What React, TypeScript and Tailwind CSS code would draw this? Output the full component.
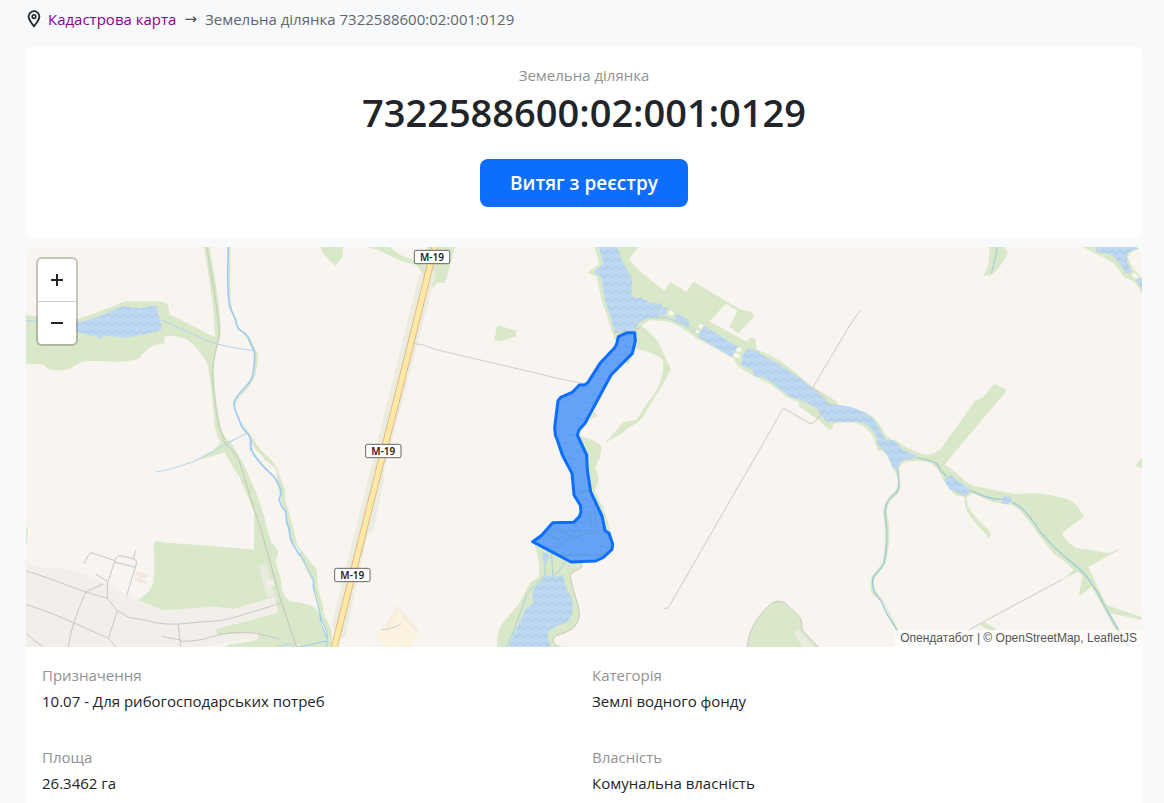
import { SVGProps } from "react";

interface Detail {
  label: string;
  value: string;
}

const cadNumber = "7322588600:02:001:0129";

const details: Detail[] = [
  { label: "Призначення", value: "10.07 - Для рибогосподарських потреб" },
  { label: "Категорія", value: "Землі водного фонду" },
  { label: "Площа", value: "26.3462 га" },
  { label: "Власність", value: "Комунальна власність" },
];

const roadSigns = [
  { x: 1218, y: 30 },
  { x: 1072, y: 612 },
  { x: 979, y: 984 },
];

const parcelPath =
  "M1777 269L1804 257H1826L1828 281L1819 319L1755 384L1677 529L1659 549L1654 564L1682 624L1684 669L1694 734L1728 807L1737 851L1749 859L1760 891L1758 907L1732 931L1709 942L1635 945L1520 884L1547 865L1580 827L1643 826L1660 809L1665 793L1663 775L1644 744L1638 679L1609 624L1594 579L1588 564L1586 541L1596 461L1604 451L1640 435L1660 414L1677 413L1686 406L1722 349L1766 302L1772 291Z";

const PinIcon: React.FC<SVGProps<SVGSVGElement>> = (props) => (
  <svg {...props} viewBox="0 0 14 18" fill="none" stroke="currentColor">
    <path
      strokeWidth={1.8}
      strokeLinejoin="round"
      d="M7 16.4C4.6 13.4 1.6 9.9 1.6 6.6a5.4 5.4 0 0 1 10.8 0c0 3.3-3 6.8-5.4 9.8z"
    />
    <circle cx="7" cy="6.6" r="1.8" strokeWidth={1.6} />
  </svg>
);

// three map units make one pixel
const ParcelMap: React.FC = () => (
  <svg
    className="block w-full h-[400px]"
    viewBox="0 0 3348 1200"
    preserveAspectRatio="xMidYMid slice"
    role="img"
    aria-label={cadNumber}
  >
    <defs>
      <pattern id="water" width="24" height="24" patternUnits="userSpaceOnUse">
        <rect width="24" height="24" fill="#bed8f1" />
        <path
          d="M-1 7q4 1 7 5q7 5 13 0q3 -4 6 -5"
          fill="none"
          stroke="#afcce9"
          strokeWidth={4}
        />
      </pattern>
    </defs>
    <rect width="3348" height="1200" fill="#f8f4ef" />

    {/* north-west: pond, railway belt, stream */}
    <g transform="translate(-18 -21)">
      <g fill="#d9e8c8">
        <path d="M18 226L60 230L170 238C220 222 270 204 315 184L410 184Q445 186 446 200L447 222L585 292C583 200 566 100 551 21H568C582 100 603 210 602 270C602 310 580 330 581 390C584 450 594 520 602 560C612 590 625 605 641 630L690 720L650 700L612 634L525 663L583 629L609 616C588 590 583 560 581 520C577 460 570 420 564 376C548 340 510 298 490 295Q460 284 433 290V312Q420 310 405 314Q380 325 357 355C320 372 240 362 205 363C165 365 162 392 118 391Q92 392 84 386C72 378 72 373 62 373L18 371Z" />
        <path d="M624 21H632C631 90 628 160 636 210L655 262L690 292L712 340Q716 365 708 395C702 435 660 465 644 495C650 530 680 565 722 632H708L640 495L698 415L704 340L684 292L652 262L628 200Z" />
      </g>
      <path
        d="M168 248C210 240 270 218 300 200Q315 196 340 204Q375 206 395 197L408 197L424 252V270C400 278 350 288 310 294Q290 290 270 288L250 290L240 298L232 290Q200 285 170 275Z"
        fill="url(#water)"
      />
      <path
        d="M18 243H60M424 239L560 302Q600 318 698 332M583 629L680 580"
        fill="none"
        stroke="#b3d1ed"
        strokeWidth={3}
      />
      <path
        d="M560 21C576 110 592 200 597 260Q599 290 592 315Q575 370 578 420C585 480 588 570 622 612"
        fill="none"
        stroke="#c5d2bd"
        strokeWidth={4}
      />
      <path
        d="M625 21Q620 150 629 198C634 215 645 230 648 245Q651 265 660 270Q683 284 687 300L703 335Q706 370 697 410C690 435 650 460 642 488C643 515 656 530 660 547Q668 567 680 578Q692 588 692 605V632"
        fill="none"
        stroke="#9ecbf2"
        strokeWidth={5}
      />
    </g>

    {/* south-west: village and fields */}
    <g transform="translate(-18 579)">
      <path
        d="M18 370L75 384Q130 380 165 394C230 410 280 445 355 481L430 512L600 500L640 507L765 470L775 518L590 570V585L715 580Q718 595 700 598L610 608L550 622H18Z"
        fill="#f2eeea"
      />
      <g fill="#d9e8c8">
        <path d="M400 315Q402 302 417 303L435 308Q490 312 510 313L702 329V215L660 115L625 34L640 20L670 70L705 150Q725 200 735 240L752 305Q775 325 773 345L767 365L782 415Q784 450 795 472L812 484C840 487 870 492 882 502L900 522V622H615L625 614L700 602Q717 598 715 585L710 577L592 585L588 568L775 518L765 470L640 507Q610 502 590 500L430 511L355 481L385 456Q402 435 401 415Q406 370 400 315Z" />
        <path d="M18 262H24L20 310H18Z" />
        <path d="M695 0L740 47Q775 75 776 100L795 150V180L807 215L832 315L890 390L892 450L900 490V510L885 390L810 295L790 200L775 150L768 85L735 60L700 15Z" />
        <path d="M607 0H625L640 18L625 34L525 63L583 29Z" />
      </g>
      <path d="M716 376L738 371L765 468L742 473Z" fill="#eaece0" />
      <path d="M737 425L758 418L764 435L743 441Z" fill="#f4efea" />
      <path
        d="M351 394L385 404L380 416L366 412L362 418L380 423L376 431L343 420L347 412L356 414L359 408L348 404Z"
        fill="#f2e7e1"
      />
      <path
        d="M410 95C440 93 490 75 525 63L642 0M770 622L810 610L825 622M850 622L900 608"
        fill="none"
        stroke="#b6d4ee"
        strokeWidth={3}
      />
      <path
        d="M609 0L625 18Q655 45 665 85C690 170 700 200 722 265L782 480L830 622"
        fill="none"
        stroke="#bfc7b6"
        strokeWidth={3}
      />
      <g fill="none" stroke="#cbc6c2" strokeWidth={3}>
        <path d="M18 393C80 410 150 440 197 456L262 475L292 512L325 532L375 540Q420 555 475 552L605 541Q640 535 782 489" />
        <path d="M18 493Q100 520 160 548L265 595L290 622M18 580Q40 603 72 622M144 622Q155 550 197 456L250 432M292 512L265 595M475 552L482 622" />
        <path d="M193 372Q205 338 215 338L285 362L262 430V475M285 362Q290 347 302 347L340 356Q350 358 350 368L346 382L320 466M285 366L346 382M340 356L347 331M228 403L262 425" />
        <path d="M427 590L482 600V604Q530 605 570 592C620 575 660 577 713 580Q730 588 745 588L782 598" />
      </g>
      <path
        d="M692 0V20C700 60 755 100 768 118L783 150Q785 165 777 177Q785 205 797 212L800 248L807 265L811 295C825 335 860 365 882 415L880 440L897 485L903 555L923 600V622"
        fill="none"
        stroke="#9ecbf2"
        strokeWidth={5}
      />
    </g>

    {/* highway corridor */}
    <g transform="translate(822 -21)">
      <g fill="#d9e8c8">
        <path d="M62 21H130L127 50L106 78L68 40Z" />
        <path d="M200 21H270Q290 45 345 62L385 75L380 21H465L455 60L435 128H412L395 145L370 110Q360 80 340 72C290 65 250 30 200 21Z" />
        <path d="M592 256L650 272L648 290L600 304L583 300Z" />
        <path d="M0 930L50 990L53 1045L70 1100V1120L95 1170V1221H80V1180L55 1110L40 1030L0 950ZM0 1090L35 1100Q55 1115 63 1150L85 1221H0Z" />
      </g>
      <path
        d="M358 102L375 110L385 60L408 100L250 700L252 720L220 870L203 882L135 1192H110L95 1155Z"
        fill="#eaece0"
      />
      <path
        d="M290 1095L358 1172L335 1205V1221H252L232 1180L258 1160Z"
        fill="#fbf3df"
      />
      <path
        d="M260 1160L292 1105L352 1172"
        fill="none"
        stroke="#f5ebdf"
        strokeWidth={9}
      />
      <path
        d="M338 310L370 315Q400 328 430 334L720 402C780 419 830 425 855 432M244 1168Q265 1172 303 1152"
        fill="none"
        stroke="#cfcbc7"
        strokeWidth={3}
      />
      <path
        d="M0 940L40 1020L42 1050L65 1140L82 1180L80 1221M0 1221L78 1203"
        fill="none"
        stroke="#9ecbf2"
        strokeWidth={3}
      />
      <path
        d="M404 21L328 328L102 1225"
        fill="none"
        stroke="#e5b68d"
        strokeWidth={21}
      />
      <path
        d="M404 21L328 328L102 1225"
        fill="none"
        stroke="#fee9a5"
        strokeWidth={15}
      />
    </g>

    {/* central reservoir and the chain of ponds */}
    <g transform="translate(1482 -21)">
      <g fill="#d9e8c8">
        <path d="M223 21H355L326 57C360 100 400 125 433 153L451 127L500 155L520 125L660 208L695 217L702 230L655 280L628 260L652 214L618 191L568 244L680 305Q695 283 708 300V327L780 362V455C740 420 720 420 655 380L640 355L530 295Q480 255 440 244L390 240Q350 265 345 275L285 300L245 180L230 110L203 97L238 72Z" />
        <path d="M345 262Q370 255 380 270L415 305L430 340L453 388C430 440 390 490 370 530C345 560 320 560 305 582L258 606L310 546L350 540C370 500 410 460 418 430Q435 390 428 360Q420 345 345 325Z" />
        <path d="M325 345L335 350L328 371L313 370ZM222 515L234 528L210 538ZM178 588Q220 595 244 620L242 640H198Z" />
      </g>
      <path
        d="M236 21H291L308 65L336 115L334 165Q345 176 360 173L390 186L427 192L418 230L378 234Q350 245 342 270L285 278Q270 220 257 190L243 110L222 97L250 72Z"
        fill="url(#water)"
      />
      <path
        d="M430 200L443 205L435 225L420 223ZM470 220L505 240L508 262L465 240ZM552 257L655 322L635 350L532 290ZM685 325L722 335L790 372V450L740 410L664 375L668 345Z"
        fill="url(#water)"
      />
      <path
        d="M450 210L462 217L456 228L444 222ZM540 251L551 256L546 266L535 261ZM530 267L540 272L535 280L525 275ZM652 322L667 326L663 337L648 333ZM643 338L662 345L657 355L640 350Z"
        fill="#faf7f2"
      />
      <path
        d="M345 272Q350 232 390 231H435Q470 240 540 273M342 265Q355 240 385 234H435Q465 240 528 278"
        fill="none"
        stroke="#a9cfe3"
        strokeWidth={2}
      />
      <path
        d="M280 280L340 273Q355 268 365 258"
        fill="none"
        stroke="#c9cdbf"
        strokeWidth={3}
      />
    </g>

    {/* lower reservoir */}
    <g transform="translate(1362 579)">
      <g fill="#d9e8c8">
        <path d="M335 0L363 15L360 55L345 80L357 115L345 155L370 205L385 250L398 300L330 300L315 60L295 0ZM378 5L392 0H380Z" />
        <path d="M160 305L270 365L305 370V380L272 402C275 440 295 480 298 520C300 560 265 580 225 590Q220 600 222 610L250 622H52Q48 570 75 540L115 495L150 430L175 410Q185 370 160 305Z" />
      </g>
      <path
        d="M200 405L220 410L250 405L255 435L277 480L278 518L262 548Q215 560 205 575Q200 600 215 622H88C95 585 120 550 135 510L158 490V450ZM190 335L207 342V358L198 370L188 360Z"
        fill="url(#water)"
      />
      <path
        d="M80 622Q100 580 142 460L195 405V370M215 340L218 408L240 390L253 366"
        fill="none"
        stroke="#a9d0df"
        strokeWidth={3}
      />
      <path
        d="M305 370V382L270 403C275 450 300 500 298 522C297 545 285 558 275 567C250 582 230 580 219 595V605L232 622M553 506Q562 507 568 498L780 130L837 32"
        fill="none"
        stroke="#cdc9c5"
        strokeWidth={3}
      />
    </g>

    {/* north-east */}
    <g transform="translate(2202 -21)">
      <g fill="#d9e8c8">
        <path d="M0 333Q40 345 100 392L158 442L200 465L231 485V495Q300 505 330 525C365 550 375 590 385 592Q400 605 460 632H355L345 605C340 580 310 550 275 547L222 550L215 568L203 566L180 543L118 500L116 486L75 468Q40 430 0 414Z" />
        <path d="M688 21H733L744 40L722 75Q705 100 690 107H669L680 90Q690 70 688 21ZM703 431L741 451L590 630H540L645 483L668 473Z" />
        <path d="M968 21H1146V27Q1105 32 1105 55L1120 85L1146 115V162Q1130 120 1090 110C1070 70 1050 60 1010 42Z" />
      </g>
      <path
        d="M-20 330L0 342L60 375L120 415L175 460L207 490L270 500C330 520 345 535 360 570L375 597L440 630H360L355 600C340 560 310 545 290 545L200 545Q180 525 170 505L135 485L90 470L20 415L-20 408Z"
        fill="url(#water)"
      />
      <path
        d="M1008 21H1146L1104 38Q1098 50 1103 70L1115 95L1100 102L1075 65L1052 43L1010 36ZM1127 116L1146 113V150Z"
        fill="url(#water)"
      />
      <path d="M1146 26Q1105 34 1105 55Q1112 80 1146 106Z" fill="#f8f4ef" />
      <path d="M1122 97L1135 110L1129 118L1115 105Z" fill="#faf7f2" />
      <path
        d="M711 21L709 40L694 100"
        fill="none"
        stroke="#acd2df"
        strokeWidth={4}
      />
      <path
        d="M301 210L270 255L158 443L185 462L204 489L185 520L165 545Q157 555 145 548L75 507Q68 504 65 512L-3 632"
        fill="none"
        stroke="#cdc9c5"
        strokeWidth={3}
      />
    </g>

    {/* south-east */}
    <g transform="translate(2142 579)">
      <g fill="#d9e8c8">
        <path d="M405 0L465 0Q530 45 565 44Q600 40 625 0H672L614 75C660 100 660 120 700 137L820 162L885 159C940 165 980 175 990 181C1010 190 1020 210 1032 230L970 275Q965 280 970 288Q990 315 1010 325L1055 330Q1095 340 1110 338L1147 325Q1120 340 1044 381L1100 495L1206 532V540L1112 520L1150 590L1135 585L1055 440L1020 467L1017 460L1028 410L1015 395L968 418L1000 390Q990 375 940 340C890 280 850 210 820 197L755 185L698 160L680 170C680 220 720 240 750 275Q755 285 747 295C720 260 680 230 674 190V170L645 165L610 120C590 70 570 58 500 65Q475 70 478 100L482 140Q478 160 465 170Q438 190 441 220C455 280 445 350 433 375C400 420 395 420 405 450L435 490L477 575H470L433 490L395 460Q388 425 395 410L427 370C440 300 435 270 430 220Q432 185 450 168L475 145L475 120L460 85L440 45L408 15Z" />
        <path d="M22 622C25 560 65 515 95 490Q115 478 133 488L175 525Q188 540 186 570L236 622ZM720 555L735 547L772 570H745ZM1184 78L1206 55V84Z" />
      </g>
      <path
        d="M410 0H460L490 30L530 47Q525 58 500 58Q480 60 472 88L458 83L440 40L412 10ZM630 105L693 150L675 170L650 155L630 150L612 120ZM790 167L810 170L817 183L802 193L785 190Z"
        fill="url(#water)"
      />
      <path d="M173 568L225 622H190Q170 600 164 578Z" fill="#eaece0" />
      <g fill="none" stroke="#9fcbd8" strokeWidth={4}>
        <path d="M472 88Q482 135 470 155C450 175 435 185 435 220Q448 300 432 370Q425 385 400 410Q390 450 425 485L440 520L475 577L510 622" />
        <path d="M530 52Q570 60 590 70L600 88L620 110M693 152Q750 180 785 178M817 187C860 205 890 260 900 275C970 360 1010 370 1040 410C1090 475 1080 480 1120 545L1167 622" />
      </g>
      <path
        d="M22 622C25 560 65 515 95 490Q115 478 133 488L175 525Q188 540 186 570L236 622M640 622L690 568L820 497L968 418"
        fill="none"
        stroke="#cdc9c5"
        strokeWidth={3}
      />
    </g>

    {/* the parcel itself */}
    <path d={parcelPath} fill="url(#water)" />
    <path
      d="M1580 910C1640 860 1690 855 1740 860M1655 742L1692 728M1690 790L1700 855M1645 830L1665 860M1590 840L1635 870M1560 860L1600 878M1610 925L1740 923M1705 790L1715 855"
      fill="none"
      stroke="#b0cfb5"
      strokeWidth={4}
    />
    <path
      d={parcelPath}
      fill="#0d6efd"
      fillOpacity={0.5}
      stroke="#0d6efd"
      strokeWidth={9}
      strokeLinejoin="round"
    />

    {roadSigns.map((sign) => (
      <g key={sign.y} transform={`translate(${sign.x} ${sign.y})`}>
        <rect
          x="-53"
          y="-20"
          width="106"
          height="40"
          rx="5"
          fill="#fff"
          stroke="#666"
          strokeWidth={3}
        />
        <text
          y="11"
          textAnchor="middle"
          fill="#222"
          fontSize="30"
          fontWeight="600"
          fontFamily="'Noto Sans', sans-serif"
        >
          M-19
        </text>
      </g>
    ))}
  </svg>
);

const MapControls: React.FC = () => (
  <div className="absolute top-2.5 left-2.5 flex flex-col w-[42px] rounded-md border-2 border-black/20 bg-white bg-clip-padding text-[#212529]">
    <button
      type="button"
      aria-label="Zoom in"
      className="flex items-center justify-center h-[43px] border-b border-[#ccc]"
    >
      <svg
        className="w-3 h-3"
        viewBox="0 0 12 12"
        stroke="currentColor"
        strokeWidth={2}
      >
        <path d="M6 0v12M0 6h12" />
      </svg>
    </button>
    <button
      type="button"
      aria-label="Zoom out"
      className="flex items-center justify-center h-[42px]"
    >
      <svg
        className="w-3 h-3"
        viewBox="0 0 12 12"
        stroke="currentColor"
        strokeWidth={2}
      >
        <path d="M0 6h12" />
      </svg>
    </button>
  </div>
);

export default function App() {
  return (
    <div className="flex flex-col min-h-screen pl-[26px] pr-[22px] bg-[#f8f9fb] text-[15px] leading-[26px] text-[#212529] font-['Open_Sans','Noto_Sans',sans-serif]">
      <nav className="flex items-center h-[47px] pb-2.5">
        <PinIcon className="w-4 h-[18px] mr-1.5" />
        <a href="#map" className="text-[#8b008b]">
          Кадастрова карта
        </a>
        <span className="mx-2 text-[#495057] font-['DejaVu_Sans',sans-serif]">
          →
        </span>
        <span className="text-[#60666c]">Земельна ділянка {cadNumber}</span>
      </nav>

      <header className="flex flex-col items-center h-48 mb-2 pt-[15px] rounded-lg bg-white">
        <p className="text-[#909294]">Земельна ділянка</p>
        <h1 className="text-[38px] leading-[48px] font-semibold">{cadNumber}</h1>
        <button
          type="button"
          className="h-12 mt-[23px] px-[30px] rounded-lg bg-[#0d6efd] text-[19px] font-semibold text-white"
        >
          Витяг з реєстру
        </button>
      </header>

      <main className="grow rounded-t-lg overflow-hidden bg-white">
        <div id="map" className="relative">
          <ParcelMap />
          <MapControls />
          <div className="absolute right-0 bottom-0 px-[5px] bg-white/70 text-xs leading-[17px] text-[#555] font-['Liberation_Sans',Arial,sans-serif]">
            <a href="#opendatabot">Опендатабот</a> | ©{" "}
            <a href="#osm">OpenStreetMap</a>, <a href="#leaflet">LeafletJS</a>
          </div>
        </div>
        <dl className="grid grid-cols-2 gap-x-4 gap-y-[30px] px-4 pt-[15px]">
          {details.map((item) => (
            <div key={item.label}>
              <dt className="text-[#909294]">{item.label}</dt>
              <dd>{item.value}</dd>
            </div>
          ))}
        </dl>
      </main>
    </div>
  );
}
